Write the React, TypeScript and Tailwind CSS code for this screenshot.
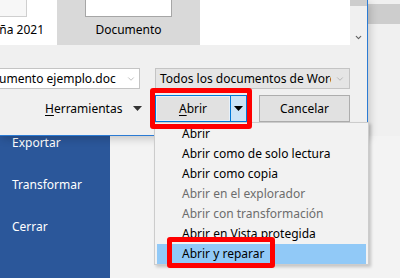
import { ChevronDown } from "lucide-react";

const menuItems = [
  { label: "Abrir" },
  { label: "Abrir como de solo lectura" },
  { label: "Abrir como copia" },
  { label: "Abrir en el explorador", disabled: true },
  { label: "Abrir con transformación", disabled: true },
  { label: "Abrir en Vista protegida" },
  { label: "Abrir y reparar", active: true },
];

const Caret = ({ className = "" }: { className?: string }) => (
  <svg width="9" height="5" viewBox="0 0 9 5" className={className}>
    <path d="M0 0h9L4.5 5z" fill="currentColor" />
  </svg>
);

const App = () => {
  return (
    <div className="relative w-[400px] h-[278px] overflow-hidden bg-[#f0f0f0] text-[12px] text-black font-['Noto_Sans','Segoe_UI',sans-serif]">
      <div className="flex h-[136px]">
        {/* file dialog */}
        <div className="relative z-10 w-[368px] flex flex-col bg-[#f0f0f0] border-r border-b border-[#2b7bd4] shadow-[2px_3px_8px_rgba(0,0,0,0.18)]">
          <div className="flex h-[45px]">
            <div className="w-[57px] bg-white flex flex-col overflow-hidden">
              <div className="w-[27px] h-[17px] bg-[#f7f7f7] border-r border-b border-[#cfcfcf]" />
              <div className="mt-auto h-[20px] mb-[5px] flex justify-end pr-[13px] whitespace-nowrap leading-[20px]">
                Campaña 2021
              </div>
            </div>
            <div className="w-[143px] bg-[#d9d9d9] flex flex-col items-center">
              <div className="w-[87px] h-[17px] bg-white border-x border-b border-[#a6a6a6]" />
              <div className="mt-auto mb-[5px] leading-[20px]">Documento</div>
            </div>
            <div className="w-[150px] bg-white" />
            <div className="w-[17px] flex flex-col items-center">
              <div className="w-full h-[6px] bg-[#cdcdcd]" />
              <ChevronDown size={9} strokeWidth={3} className="mt-[27px] text-[#606060]" />
            </div>
          </div>

          <div className="flex mt-[23px] h-[21px]">
            <div className="w-[140px] bg-white border border-l-0 border-[#c4c4c4] flex items-center overflow-hidden">
              <span className="whitespace-nowrap flex-1 -ml-[1px]">umento ejemplo.doc</span>
              <ChevronDown size={10} strokeWidth={1.5} className="mr-[3px] text-[#9a9a9a]" />
            </div>
            <div className="ml-[15px] w-[195px] bg-[#e5e5e5] border border-[#c4c4c4] flex items-center overflow-hidden">
              <span className="whitespace-nowrap flex-1 overflow-hidden pl-[4px]">
                Todos los documentos de Word (*.docx)
              </span>
              <ChevronDown size={10} strokeWidth={1.5} className="mx-[4px] shrink-0 text-[#9a9a9a]" />
            </div>
          </div>

          <div className="flex items-center mt-[6px] h-[27px]">
            <div className="w-[155px] flex items-center pl-[45px]">
              <span>
                <span className="underline underline-offset-2">H</span>erramientas
              </span>
              <Caret className="ml-[11px] text-[#333]" />
            </div>
            <div className="flex h-[27px]">
              <div className="w-[76px] border border-[#0078d7] bg-[#e1e1e1] flex items-center justify-center shadow-[inset_0_0_0_1px_#e8f1fa]">
                <span>
                  <span className="underline underline-offset-2">A</span>brir
                </span>
              </div>
              <div className="w-[16px] border border-l-0 border-[#0078d7] bg-[#cce4f7] flex items-center justify-center">
                <Caret />
              </div>
            </div>
            <div className="ml-[12px] w-[91px] h-[27px] bg-[#e1e1e1] border border-[#adadad] flex items-center justify-center">
              Cancelar
            </div>
          </div>
        </div>

        {/* backstage behind dialog */}
        <div className="flex-1 flex flex-col">
          <div className="h-[4px]" />
          <div className="h-[20px] bg-[#cdcdcd]" />
        </div>
      </div>

      <div className="flex h-[142px]">
        <div className="w-[110px] bg-[#2b579a] text-white text-[12px] pl-[12px] flex flex-col gap-[22px] -mt-[1px]">
          <div className="leading-[20px] -mt-[2px]">Exportar</div>
          <div className="leading-[20px]">Transformar</div>
          <div className="leading-[20px]">Cerrar</div>
        </div>
        <div className="flex-1 bg-[#f3f3f3]" />
      </div>

      {/* split button menu */}
      <div className="absolute z-20 left-[154px] top-[122px] w-[215px] bg-[#f2f2f2] border border-[#cccccc] pt-[1px] shadow-[2px_2px_3px_rgba(0,0,0,0.2)]">
        {menuItems.map((item, i) => (
          <div
            key={i}
            className={`h-[20px] mx-[2px] pl-[25px] leading-[20px] whitespace-nowrap ${
              item.active ? "bg-[#91c9f7]" : ""
            } ${item.disabled ? "text-[#6d6d6d]" : "text-black"}`}
          >
            {item.label}
          </div>
        ))}
      </div>

      {/* annotation boxes */}
      <div className="absolute z-30 left-[150px] top-[88px] w-[102px] h-[41px] border-[5px] border-[#ff0000] rounded-[3px]" />
      <div className="absolute z-30 left-[167px] top-[237px] w-[108px] h-[31px] border-[5px] border-[#ff0000] rounded-[3px]" />
    </div>
  );
};

export default App;
